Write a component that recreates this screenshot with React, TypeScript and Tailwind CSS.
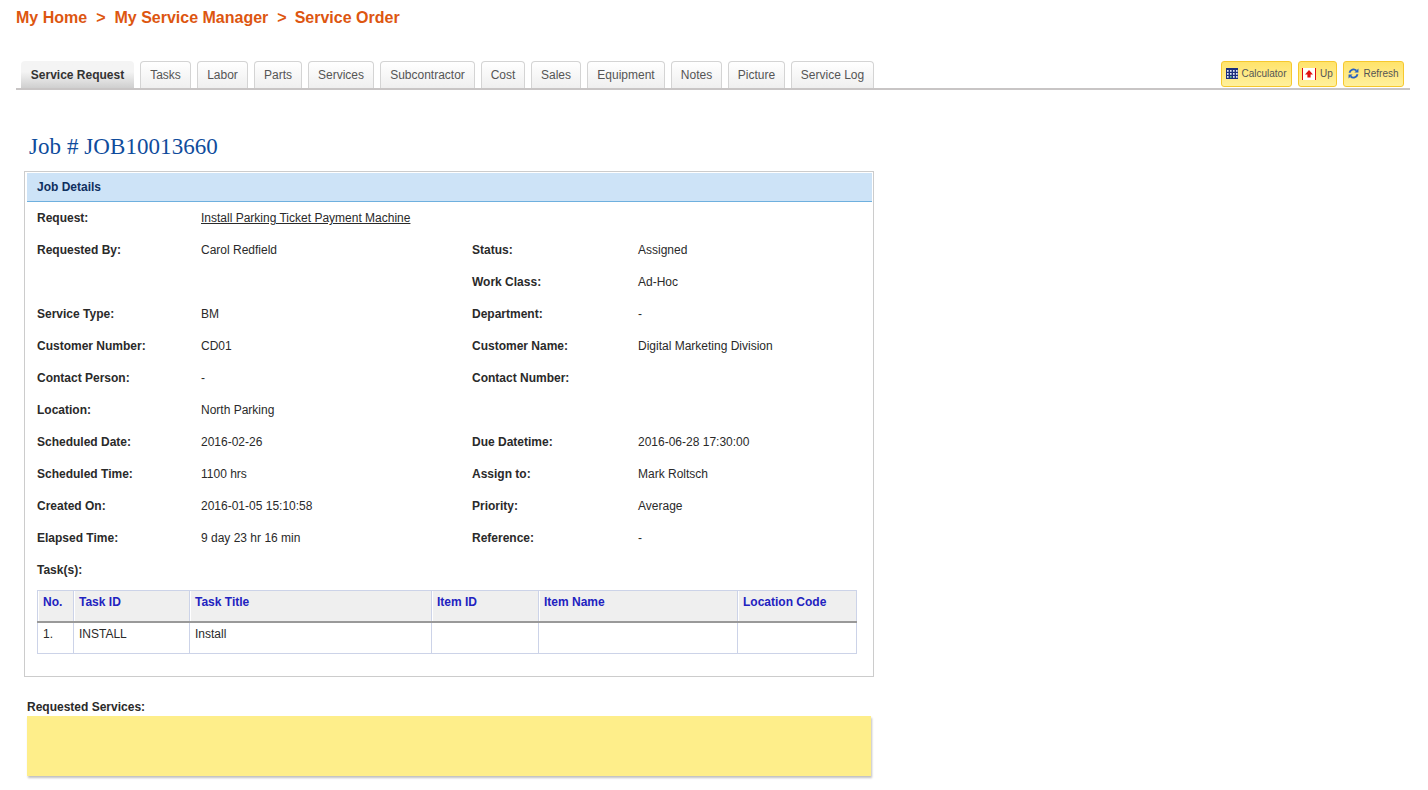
import React from 'react';

const tabs = [
  { label: 'Tasks', w: 'w-[51px]' },
  { label: 'Labor', w: 'w-[51px]' },
  { label: 'Parts', w: 'w-[48px]' },
  { label: 'Services', w: 'w-[66px]' },
  { label: 'Subcontractor', w: 'w-[95px]' },
  { label: 'Cost', w: 'w-[44px]' },
  { label: 'Sales', w: 'w-[50px]' },
  { label: 'Equipment', w: 'w-[78px]' },
  { label: 'Notes', w: 'w-[51px]' },
  { label: 'Picture', w: 'w-[57px]' },
  { label: 'Service Log', w: 'w-[83px]' },
];

const rows: [string, string, string, string][] = [
  ['Requested By:', 'Carol Redfield', 'Status:', 'Assigned'],
  ['', '', 'Work Class:', 'Ad-Hoc'],
  ['Service Type:', 'BM', 'Department:', '-'],
  ['Customer Number:', 'CD01', 'Customer Name:', 'Digital Marketing Division'],
  ['Contact Person:', '-', 'Contact Number:', ''],
  ['Location:', 'North Parking', '', ''],
  ['Scheduled Date:', '2016-02-26', 'Due Datetime:', '2016-06-28 17:30:00'],
  ['Scheduled Time:', '1100 hrs', 'Assign to:', 'Mark Roltsch'],
  ['Created On:', '2016-01-05 15:10:58', 'Priority:', 'Average'],
  ['Elapsed Time:', '9 day 23 hr 16 min', 'Reference:', '-'],
];

const columns = [
  { label: 'No.', w: 'w-[36px]' },
  { label: 'Task ID', w: 'w-[116px]' },
  { label: 'Task Title', w: 'w-[242px]' },
  { label: 'Item ID', w: 'w-[107px]' },
  { label: 'Item Name', w: 'w-[199px]' },
  { label: 'Location Code', w: 'w-[119px]' },
];

function CalculatorIcon() {
  return (
    <svg width="12" height="11" viewBox="0 0 12 11">
      <rect width="12" height="11" fill="#1c2f7c" />
      {[1, 4, 7, 10].map((x) =>
        [2, 5, 8].map((y) => (
          <rect key={`${x}-${y}`} x={x} y={y} width="1.6" height="1.8" fill={y === 8 && x === 4 ? '#5fc08a' : '#dfe6f5'} />
        )),
      )}
    </svg>
  );
}

function UpIcon() {
  return (
    <svg width="14" height="12" viewBox="0 0 14 12">
      <rect width="14" height="12" fill="#fff" />
      <rect width="1" height="12" fill="#e01010" />
      <rect x="13" width="1" height="12" fill="#e01010" />
      <path d="M7 2 L11 6.5 H8.6 V9.5 H5.4 V6.5 H3 Z" fill="#e01010" />
    </svg>
  );
}

function RefreshIcon() {
  return (
    <svg width="11" height="11" viewBox="0 0 12 12" fill="none">
      <path d="M1.6 5.2 A4.5 4.5 0 0 1 9.2 2.9" stroke="#2a62c0" strokeWidth="2" />
      <path d="M11.4 0.6 V5 H7 Z" fill="#2a62c0" />
      <path d="M10.4 6.8 A4.5 4.5 0 0 1 2.8 9.1" stroke="#2a62c0" strokeWidth="2" />
      <path d="M0.6 11.4 V7 H5 Z" fill="#2a62c0" />
    </svg>
  );
}

function ToolButton({ icon, label, w, gap }: { icon: React.ReactNode; label: string; w: string; gap: string }) {
  return (
    <button className={`${w} ${gap} flex h-[26px] items-center justify-center rounded-[3px] border border-[#f6c82e] bg-gradient-to-b from-[#ffe36a] to-[#fff09c] pb-[1px] text-[10px] text-[#555]`}>
      {icon}
      <span>{label}</span>
    </button>
  );
}

export default function App() {
  return (
    <div className="min-h-[790px] bg-white pl-4 pr-[18px] pt-[9px] font-['Liberation_Sans',Arial,sans-serif] text-[12px] text-[#2a2a2a]">
      <div className="flex h-[18px] items-center text-[16px] font-bold text-[#dd5610]">
        <span>My Home</span>
        <span className="mx-[9px]">&gt;</span>
        <span>My Service Manager</span>
        <span className="ml-[9px] mr-[8px]">&gt;</span>
        <span>Service Order</span>
      </div>

      <div className="mt-[34px] flex h-[29px] items-end justify-between border-b-2 border-[#c8c5c5] pl-[5px] pr-[6px]">
        <div className="flex gap-[6px]">
          <div className="flex h-[27px] w-[113px] items-center justify-center rounded-t-[4px] bg-gradient-to-b from-[#f4f4f4] from-40% to-[#cfcfcf] font-bold text-[#333]">
            Service Request
          </div>
          {tabs.map((t) => (
            <div
              key={t.label}
              className={`${t.w} flex h-[27px] items-center justify-center rounded-t-[4px] border border-b-0 border-[#d4d4d4] bg-gradient-to-b from-white to-[#efefef] text-[#555]`}
            >
              {t.label}
            </div>
          ))}
        </div>
        <div className="mb-[1px] flex gap-[6px]">
          <ToolButton icon={<CalculatorIcon />} label="Calculator" w="w-[71px]" gap="gap-[3px]" />
          <ToolButton icon={<UpIcon />} label="Up" w="w-[39px]" gap="gap-[4px]" />
          <ToolButton icon={<RefreshIcon />} label="Refresh" w="w-[61px]" gap="gap-[4px]" />
        </div>
      </div>

      <h1 className="ml-[13px] mt-[43px] h-[28px] font-['Liberation_Serif',Georgia,serif] text-[23px] leading-[28px] tracking-[0.06px] text-[#0f4c9c] oldstyle-nums">
        Job # JOB10013660
      </h1>

      <div className="ml-[8px] mt-[10px] h-[506px] w-[850px] border border-[#cccccc] p-[1px] pl-[2px]">
        <div className="flex h-[29px] w-[845px] items-center border-b border-[#6fb0de] bg-[#cde3f7] pl-[10px] font-bold text-[#0f2f5f]">
          Job Details
        </div>
        <div className="w-[835px] pl-[10px]">
          <div className="grid h-8 grid-cols-[164px_1fr] items-center">
            <b>Request:</b>
            <span className="underline">Install Parking Ticket Payment Machine</span>
          </div>
          {rows.map((r, i) => (
            <div key={i} className="grid h-8 grid-cols-[164px_271px_166px_1fr] items-center">
              <b>{r[0]}</b>
              <span>{r[1]}</span>
              <b>{r[2]}</b>
              <span>{r[3]}</span>
            </div>
          ))}
          <div className="flex h-8 items-center font-bold">Task(s):</div>

          <table className="mt-[4px] w-[819px] table-fixed border-collapse">
            <thead>
              <tr className="h-[31px]">
                {columns.map((c) => (
                  <th
                    key={c.label}
                    className={`${c.w} border border-b-2 border-[#ccd3e8] border-b-[#999] bg-[#efefef] pb-[8px] pl-[5px] text-left align-middle font-bold text-[#2222c0] shadow-[inset_1px_0_0_#fff]`}
                  >
                    {c.label}
                  </th>
                ))}
              </tr>
            </thead>
            <tbody>
              <tr className="h-[32px]">
                {['1.', 'INSTALL', 'Install', '', '', ''].map((v, i) => (
                  <td key={i} className="border border-[#ccd3e8] pb-[7px] pl-[5px] align-middle">
                    {v}
                  </td>
                ))}
              </tr>
            </tbody>
          </table>
        </div>
      </div>

      <div className="ml-[11px] mt-[23px] h-[15px] font-bold leading-[15px]">Requested Services:</div>
      <div className="ml-[11px] mt-[1px] h-[60px] w-[844px] bg-[#feee8a] shadow-[1px_2px_2px_rgba(0,0,0,0.25)]" />
    </div>
  );
}
